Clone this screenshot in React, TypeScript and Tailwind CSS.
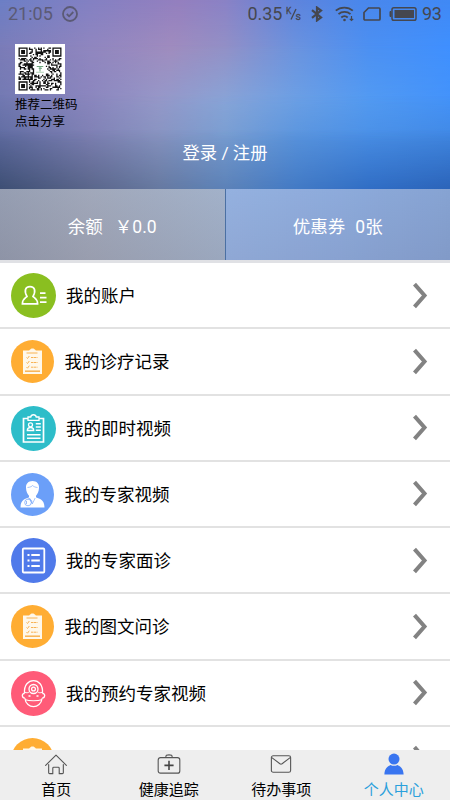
import type { ReactNode } from "react";
import clsx from "clsx";

const QR_SIZE = 33;

const FINDERS = [
    [0, 0],
    [QR_SIZE - 7, 0],
    [0, QR_SIZE - 7],
];

function isDark(x: number, y: number) {
    for (const [fx, fy] of FINDERS) {
        const dx = x - fx;
        const dy = y - fy;
        if (dx >= -1 && dx <= 7 && dy >= -1 && dy <= 7) {
            const d = Math.max(Math.abs(dx - 3), Math.abs(dy - 3));
            return d === 3 || d <= 1;
        }
    }
    if (Math.abs(x - 16) <= 4 && Math.abs(y - 16) <= 4) return false;
    const h = Math.sin(x * 12.9898 + y * 78.233) * 43758.5453;
    return h - Math.floor(h) < 0.53;
}

const qrPath = Array.from({ length: QR_SIZE * QR_SIZE }, (_, i) => {
    const x = i % QR_SIZE;
    const y = Math.floor(i / QR_SIZE);
    return isDark(x, y) ? `M${x} ${y}h1v1h-1z` : "";
}).join("");

function QrCode() {
    return (
        <svg viewBox="-2.7 -2.7 38.4 38.4" className="block h-[50px] w-[50px] bg-white">
            <path d={qrPath} fill="#111" />
            <path d="M14 14.5h5M16.5 15v3.5M15.5 16h2.5" stroke="#6fa57e" strokeWidth=".8" fill="none" />
            <path d="M13.5 19h6" stroke="#a8cbb0" strokeWidth=".7" />
        </svg>
    );
}

function HeaderBackground() {
    return (
        <div className="absolute inset-0">
            <div className="absolute inset-0 bg-[linear-gradient(90deg,#6c7fc6_0%,#8380c3_20%,#947fbf_40%,#8a82c6_50%,#5f84dc_65%,#4a87ec_80%,#4089f5_100%)]" />
            <div className="absolute inset-0 bg-[linear-gradient(90deg,#7b7cb8_0%,#9086bf_20%,#a08cbe_38%,#9390c6_50%,#6a93df_66%,#4c90f2_82%,#3f90ff_100%)] [mask-image:linear-gradient(180deg,transparent_0px,black_50px)]" />
            <div className="absolute inset-0 bg-[linear-gradient(90deg,#7279b2_0%,#8a86be_20%,#9598c9_35%,#88a5d8_50%,#6ca0e5_66%,#539bf2_82%,#4493fa_100%)] [mask-image:linear-gradient(180deg,transparent_45px,black_105px)]" />
            <div className="absolute inset-0 bg-[linear-gradient(90deg,#5f6ba0_0%,#7d80b3_20%,#8793c0_35%,#789dd1_50%,#5994dd_66%,#4a8fe5_82%,#4188e2_100%)] [mask-image:linear-gradient(180deg,transparent_95px,black_142px)]" />
            <div className="absolute inset-0 bg-[linear-gradient(90deg,#3d4e73_0%,#59658a_20%,#65789f_35%,#5b81b7_50%,#4279c4_66%,#306dc4_82%,#2b63b8_100%)] [mask-image:linear-gradient(180deg,transparent_130px,black_190px)]" />
        </div>
    );
}

function StatusBar() {
    return (
        <div className="flex h-7 items-center pl-2 pr-[9px] font-[Roboto,sans-serif] text-[18px] leading-7 text-[#45474f]">
            <span className="w-[46px] text-[#5b5a75]">21:05</span>
            <svg viewBox="0 0 16 16" className="ml-2 h-4 w-4" fill="none" stroke="#5b5a75" strokeWidth="1.8">
                <circle cx="8" cy="8" r="7" />
                <path d="M4.8 8l2.3 2.3 4.2-4.3" />
            </svg>
            <span className="ml-auto">0.35</span>
            <svg viewBox="0 0 17 16" className="ml-[3px] h-4 w-[17px]">
                <text x="0" y="7.5" fontSize="8.5" fill="currentColor" stroke="currentColor" strokeWidth=".3">K</text>
                <path d="M5 13.5L10 3" stroke="currentColor" strokeWidth="1.3" />
                <text x="9.5" y="14" fontSize="10.5" fill="currentColor" stroke="currentColor" strokeWidth=".3">s</text>
            </svg>
            <svg viewBox="0 0 12 16" className="ml-2 h-4 w-3" fill="none" stroke="currentColor" strokeWidth="2.2">
                <path d="M1 4.2l9 7.3-4 2.9V1.6l4 2.9-9 7.3" />
            </svg>
            <svg viewBox="0 0 19 16" className="ml-3 h-4 w-[19px]" fill="none" stroke="currentColor" strokeWidth="1.8">
                <path d="M.8 4.7c4.7-4.2 12.3-4.2 17 0M3.5 8.2c3.3-3 8.7-3 12 0M6.3 11.5c1.8-1.7 4.6-1.7 6.4 0" />
                <circle cx="9.5" cy="14" r="1.3" fill="currentColor" stroke="none" />
                <path d="M16.5 10v4.5M14.8 12.8l1.7 1.7 1.7-1.7" strokeWidth="1.2" />
            </svg>
            <svg viewBox="0 0 18 14" className="ml-[9.5px] h-[14px] w-[18px]" fill="none" stroke="currentColor" strokeWidth="1.7">
                <path d="M5.5 1H16a1 1 0 0 1 1 1v10a1 1 0 0 1-1 1H2a1 1 0 0 1-1-1V5.5z" />
            </svg>
            <svg viewBox="0 0 28 14" className="ml-2 h-[14px] w-7">
                <rect x="3" y=".8" width="24" height="12.4" rx="1.8" fill="none" stroke="currentColor" strokeWidth="1.5" />
                <path d="M2 4.5H1v5h1z" fill="currentColor" stroke="currentColor" />
                <path d="M5.5 3H25v8H5.5z" fill="currentColor" />
            </svg>
            <span className="ml-[5px] w-[19px] tracking-[-0.3px]">93</span>
        </div>
    );
}

function AccountIcon() {
    return (
        <svg viewBox="0 0 45 45" className="h-[45px] w-[45px]" fill="none" stroke="#fff" strokeWidth="1.7">
            <circle cx="22.5" cy="22.5" r="22.5" fill="#8abf20" stroke="none" />
            <path d="M16 23.4c-3-5.2-2-9.7 3-9.7s6 4.500 3 9.700c1 1.300 4.600 2.200 4.600 7.400H11.400c0-5.200 3.600-6.100 4.600-7.400z" />
            <path d="M29 20.2h5.5M29 24.700h6.500M29 29.200h6.500" strokeWidth="1.8" />
        </svg>
    );
}

function ChecklistIcon() {
    return (
        <svg viewBox="0 0 43 43" className="h-[43px] w-[43px]">
            <circle cx="21.5" cy="21.5" r="21.5" fill="#ffad33" />
            <path d="M12 10.500h5.500c1.500 0 1.500-2 4-2s2.500 2 4 2H31v23.500H12z" fill="#fff8ea" />
            <g fill="none" stroke="#f8b353" strokeWidth="1">
                <path d="M15.500 13h11" />
                <path d="M20 17.500h6.500M20 22.500h6.500M20 27.200h6.500" strokeDasharray="2.5 .5" />
                <path d="M15.500 17.500l1 1 1.800-2.500M15.500 22.500l1 1 1.800-2.500M15.500 27.200l1 1 1.800-2.500" />
                <path d="M14 31.200h15" strokeWidth="1.5" />
            </g>
        </svg>
    );
}

function RecordIcon() {
    return (
        <svg viewBox="0 0 45 45" className="h-[45px] w-[45px]" fill="none" stroke="#fff" strokeWidth="1.7">
            <circle cx="22.5" cy="22.5" r="22.5" fill="#2dbdc9" stroke="none" />
            <path d="M17 12.500h-4.500v23.500h20v-23.500H28" />
            <path d="M17 11h2.800c.3-3 5-3 5.400 0H28v3.300H17z" fill="#2dbdc9" strokeWidth="1.3" />
            <circle cx="19.5" cy="18.8" r="2" strokeWidth="1.3" />
            <path d="M16.300 24.500c0-4 6.400-4 6.400 0z" strokeWidth="1.3" />
            <path d="M24.800 17.800h5M24.800 21h5M24.800 24.200h5M16 28.700h13.500M16 32.300h13.500" strokeWidth="1.4" />
        </svg>
    );
}

function DoctorIcon() {
    return (
        <svg viewBox="0 0 43 43" className="h-[43px] w-[43px]">
            <circle cx="21.5" cy="21.5" r="21.5" fill="#6b9ff8" />
            <path d="M21.500 8c4.300 0 6.700 2.800 6.500 6.800-.2 4-1.400 6.200-3 8v1.400c2 1.800 8.500 1 8.500 10.300H9.500c0-9.300 6.500-8.500 8.500-10.300v-1.400c-1.600-1.800-2.800-4-3-8C14.800 10.800 17.200 8 21.500 8z" fill="#fff" />
            <g fill="none" stroke="#6b9ff8" strokeWidth=".7">
                <path d="M16.500 14.500c3-.2 4.500-1.300 5-2 1.300 1.200 3 1.800 5 2" strokeWidth=".6" />
                <path d="M18.500 25l2.800 6 2.900-6M16.500 25c3 1 5 2.500 4.500 5" strokeWidth=".6" />
                <circle cx="17" cy="29.500" r="3.300" />
                <path d="M15.500 28v3" />
            </g>
        </svg>
    );
}

function ListIcon() {
    return (
        <svg viewBox="0 0 45 45" className="h-[45px] w-[45px]" fill="none" stroke="#fff" strokeWidth="1.8">
            <circle cx="22.5" cy="22.5" r="22.5" fill="#507aea" stroke="none" />
            <rect x="11.8" y="10.5" width="21.5" height="24" rx="1" />
            <path d="M16.500 17h2M16.500 22.500h2M16.500 28h2M20.300 17h8.500M20.300 22.500h8.500M20.300 28h8.500" strokeWidth="1.9" />
        </svg>
    );
}

function SurgeonIcon() {
    return (
        <svg viewBox="0 0 45 45" className="h-[45px] w-[45px]" fill="none" stroke="#fff" strokeWidth="1.3">
            <circle cx="22.5" cy="22.5" r="22.5" fill="#ff5b78" stroke="none" />
            <path d="M13.500 22.500C12 5.200 33 5.200 31.500 22.500" />
            <path d="M14 21.200c1.500.8 3 .8 4.300-.4M31 21.200c-1.500.8-3 .8-4.300-.4" strokeWidth="1" />
            <path d="M13.500 22.500c-3.200-.3-2.700 4.500.4 4.700M31.500 22.500c3.200-.3 2.700 4.500-.4 4.700" />
            <path d="M13.900 27.200c1.300 11.300 15.900 11.300 17.200 0" />
            <path d="M14.500 28.700c3.500 1.300 12.500 1.300 16 0" strokeWidth="1.1" />
            <circle cx="22.5" cy="18" r="4.500" />
            <circle cx="22.5" cy="18" r="1.9" />
            <path d="M17.500 25h2M25.500 25h2" strokeWidth="1.5" />
        </svg>
    );
}

interface MenuItem {
    label: string;
    icon: ReactNode;
    small?: boolean;
}

const menuItems: MenuItem[] = [
    { label: "我的账户", icon: <AccountIcon /> },
    { label: "我的诊疗记录", icon: <ChecklistIcon />, small: true },
    { label: "我的即时视频", icon: <RecordIcon /> },
    { label: "我的专家视频", icon: <DoctorIcon />, small: true },
    { label: "我的专家面诊", icon: <ListIcon /> },
    { label: "我的图文问诊", icon: <ChecklistIcon />, small: true },
    { label: "我的预约专家视频", icon: <SurgeonIcon /> },
    { label: "", icon: <ChecklistIcon />, small: true },
];

function MenuRow({ label, icon, small }: MenuItem) {
    return (
        <div className="flex h-[66.25px] shrink-0 items-center border-b-2 border-[#e2e2e2] pl-[10.5px] pr-[22px] pt-px">
            {icon}
            <span className={clsx("pt-px text-[17.5px] leading-6 text-black", small ? "ml-[11px]" : "ml-[10.5px]")}>{label}</span>
            <svg viewBox="0 0 16 28" className="ml-auto h-7 w-4" fill="none" stroke="#828282" strokeWidth="4">
                <path d="M2.500 2.200L12.500 13.500 2.500 24.800" />
            </svg>
        </div>
    );
}

const tabs = [
    {
        label: "首页",
        icon: (
            <svg viewBox="0 0 26 24" className="h-6 w-[26px]" fill="none" stroke="#555" strokeWidth="1.2" strokeLinecap="round" strokeLinejoin="round">
                <path d="M1.700 13.500L13 2.200 24.300 13.500" />
                <path d="M5 12.500V21.500q0 1 1 1h3.500v-6q0-1 1-1h5q1 0 1 1v6H20q1 0 1-1v-9" />
            </svg>
        ),
    },
    {
        label: "健康追踪",
        icon: (
            <svg viewBox="0 0 26 24" className="h-6 w-[26px]" fill="none" stroke="#555" strokeWidth="1.2">
                <rect x="1.2" y="5" width="23.6" height="17" rx="2.5" />
                <path d="M9.500 5c0-3 .8-3 3.500-3s3.500 0 3.500 3" />
                <path d="M13 8.500v10M8 13.500h10" stroke="#444" strokeWidth="1.7" />
            </svg>
        ),
    },
    {
        label: "待办事项",
        icon: (
            <svg viewBox="0 0 26 24" className="h-6 w-[26px]" fill="none" stroke="#555" strokeWidth="1.2">
                <rect x="2.5" y="3" width="21" height="18" rx="2" />
                <path d="M3 5l8.800 6.700q1.200.8 2.400 0L23 5" />
            </svg>
        ),
    },
    {
        label: "个人中心",
        active: true,
        icon: (
            <svg viewBox="0 0 26 24" className="h-6 w-[26px]" fill="#3975f0">
                <circle cx="13" cy="6.6" r="6" />
                <path d="M2.500 23.500c0-7 4.300-9.500 6.800-10.500 2.200 1.300 5.200 1.300 7.400 0 2.500 1 6.800 3.500 6.800 10.500z" />
            </svg>
        ),
    },
];

export default function App() {
    return (
        <div className="flex h-[800px] w-[450px] flex-col overflow-hidden bg-white font-[Roboto,'Noto_Sans_CJK_SC',sans-serif]">
            <header className="relative h-[189px] shrink-0">
                <HeaderBackground />
                <div className="relative flex h-full flex-col">
                    <StatusBar />
                    <div className="mt-4 ml-[15px] w-20">
                        <QrCode />
                        <p className="mt-[2px] text-[12.5px] leading-[17px] text-black">
                            推荐二维码
                            <br />
                            点击分享
                        </p>
                    </div>
                    <p className="mt-[11px] text-center text-[17.3px] leading-6 text-white">登录 / 注册</p>
                </div>
            </header>
            <div className="flex h-[71px] shrink-0 text-[17.5px] text-white">
                <div className="flex flex-1 items-center justify-center border-r border-[#4b70a3] bg-[linear-gradient(170deg,#a9b9d050,#84879650),linear-gradient(90deg,#8c91a4,#9fa3b4_40%,#a5b6d0)] pt-[5px]">
                    <span>余额</span>
                    <span className="ml-3">￥0.0</span>
                </div>
                <div className="flex flex-1 items-center justify-center bg-[linear-gradient(170deg,#94b7e560,#8092b960),linear-gradient(90deg,#94addb,#8ba7da_50%,#829fd1)] pt-[5px]">
                    <span>优惠券</span>
                    <span className="ml-[10px]">0张</span>
                </div>
            </div>
            <main className="flex min-h-0 flex-1 flex-col overflow-hidden border-t-[3px] border-[#e0e1e5]">
                {menuItems.map((item, i) => (
                    <MenuRow key={i} {...item} />
                ))}
            </main>
            <nav className="flex h-[50px] shrink-0 bg-[#eee]">
                {tabs.map((tab) => (
                    <button key={tab.label} className="flex flex-1 flex-col items-center pt-[3px]">
                        {tab.icon}
                        <span className={clsx("mt-[5px] text-[15px] leading-5", tab.active ? "text-[#2ba0dc]" : "text-black")}>{tab.label}</span>
                    </button>
                ))}
            </nav>
        </div>
    );
}
